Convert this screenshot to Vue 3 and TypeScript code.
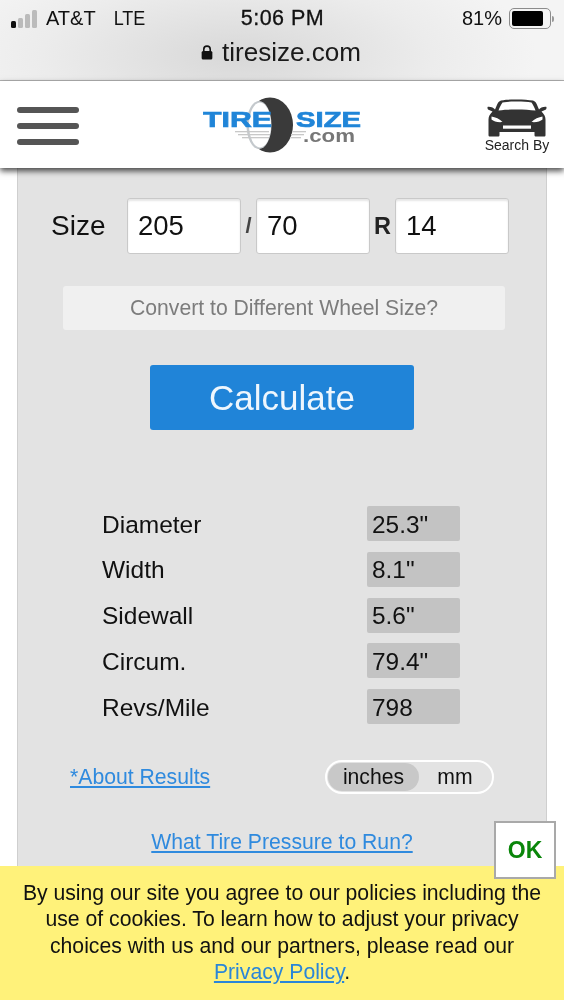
<script setup lang="ts">
const rows = [
  { label: 'Diameter', value: '25.3"' },
  { label: 'Width', value: '8.1"' },
  { label: 'Sidewall', value: '5.6"' },
  { label: 'Circum.', value: '79.4"' },
  { label: 'Revs/Mile', value: '798' },
]
</script>

<template>
  <div class="page">
    <header class="browser">
      <div class="status">
        <div class="status-left">
          <span class="signal"><i class="on"></i><i></i><i></i><i></i></span>
          <span>AT&amp;T</span>
          <span class="lte">LTE</span>
        </div>
        <div class="time">5:06 PM</div>
        <div class="status-right">
          <span>81%</span>
          <span class="battery"><span class="level"></span></span>
          <span class="nub"></span>
        </div>
      </div>
      <div class="address">
        <svg class="lock" viewBox="0 0 11 14" width="12" height="15">
          <path d="M2.500 6V4a3 3 0 0 1 6 0v2" fill="none" stroke="#111" stroke-width="1.500" />
          <rect x="0.500" y="5.500" width="10" height="8" rx="1.400" fill="#111" />
        </svg>
        <span>tiresize.com</span>
      </div>
    </header>

    <nav class="nav">
      <div class="burger"><i></i><i></i><i></i></div>
      <svg class="logo" viewBox="0 0 160 58" width="160" height="58">
        <ellipse cx="67" cy="29" rx="23" ry="27.500" fill="#3a3a3a" />
        <ellipse cx="56" cy="29" rx="12.500" ry="24" fill="#c4c9cd" />
        <ellipse cx="57" cy="29" rx="11" ry="22.500" fill="#fff" />
        <g fill="#c8c8c8">
          <rect x="32" y="35" width="34" height="1.300" />
          <rect x="35" y="38" width="32" height="1.300" />
          <rect x="39" y="41" width="27" height="1.300" />
          <rect x="89" y="35" width="14" height="1.300" />
          <rect x="88" y="38" width="13" height="1.300" />
          <rect x="87" y="41" width="11" height="1.300" />
        </g>
        <text x="0" y="31" class="logo-word" textLength="69" lengthAdjust="spacingAndGlyphs">TIRE</text>
        <text x="93" y="31" class="logo-word" textLength="65" lengthAdjust="spacingAndGlyphs">SIZE</text>
        <text x="100" y="46" class="logo-com" textLength="52" lengthAdjust="spacingAndGlyphs">.com</text>
      </svg>
      <div class="search-by">
        <svg class="car" viewBox="0 0 60 38" width="60" height="38">
          <path fill="#333" d="M14 1.500 C22 0 38 0 46 1.500 C48 2 49.500 4 50.500 7 L52 10.500 C53 8.800 56 7.600 59 7.800 C60 8 59.500 10 58.500 10.800 L54.500 12.500 C57 15 58.500 17.500 58.500 20.500 V36 C58.500 37 58 37.500 57 37.500 H49 C48 37.500 47.500 37 47.500 36 V33 H12.500 V36 C12.500 37 12 37.500 11 37.500 H3 C2 37.500 1.500 37 1.500 36 V20.500 C1.500 17.500 3 15 5.500 12.500 L1.500 10.800 C0.500 10 0 8 1 7.800 C4 7.600 7 8.800 8 10.500 L9.500 7 C10.500 4 12 2 14 1.500 Z" />
          <path fill="#fff" d="M15.500 3.500 C23 2.300 37 2.300 44.500 3.500 C46 5.500 47.500 8.500 48.500 11.500 C38 10 22 10 11.500 11.500 C12.500 8.500 14 5.500 15.500 3.500 Z" />
          <path fill="#fff" d="M4.500 17.500 C8 18 13 20 15.500 23 C11 23.500 6.500 22.500 4.500 20.500 Z M55.500 17.500 C52 18 47 20 44.500 23 C49 23.500 53.500 22.500 55.500 20.500 Z" />
          <rect x="16" y="26.500" width="28" height="3.200" fill="#fff" />
        </svg>
        <span>Search By</span>
      </div>
    </nav>

    <main class="card">
      <div class="size-row">
        <span class="size-label">Size</span>
        <div class="field">205</div>
        <span class="sep slash">/</span>
        <div class="field">70</div>
        <span class="sep r">R</span>
        <div class="field">14</div>
      </div>

      <div class="convert">Convert to Different Wheel Size?</div>

      <button class="calc" type="button">Calculate</button>

      <div class="results">
        <div v-for="row in rows" :key="row.label" class="result">
          <span class="result-label">{{ row.label }}</span>
          <span class="result-value">{{ row.value }}</span>
        </div>
      </div>

      <div class="options">
        <a class="link about">*About Results</a>
        <div class="toggle">
          <span class="opt active">inches</span>
          <span class="opt">mm</span>
        </div>
      </div>

      <div class="pressure"><a class="link">What Tire Pressure to Run?</a></div>
    </main>

    <aside class="cookie">
      <p>
        By using our site you agree to our policies including the use of cookies. To learn how to adjust your privacy
        choices with us and our partners, please read our <a class="policy">Privacy Policy</a>.
      </p>
      <button class="ok" type="button">OK</button>
    </aside>
  </div>
</template>

<style>
html, body { margin: 0; padding: 0; background: #fff; }
</style>

<style scoped>
.page {
  position: relative;
  width: 564px;
  height: 1000px;
  overflow: hidden;
  background: #fff;
  font-family: "Liberation Sans", Arial, sans-serif;
  color: #111;
  filter: blur(0.35px);
}
.browser {
  height: 80px;
  box-sizing: content-box;
  border-bottom: 1px solid #b4b4b4;
  background: radial-gradient(ellipse 300px 110px at 42% 70%, #d8d8d8, #ececec 65%, #f4f4f4);
}
.status {
  display: grid;
  grid-template-columns: 1fr auto 1fr;
  align-items: center;
  height: 37px;
  padding: 0 10px 0 11px;
  font-size: 20px;
}
.status-left { display: flex; align-items: center; }
.signal { display: flex; align-items: flex-end; gap: 2px; width: 29px; height: 18px; margin-right: 6px; }
.signal i { width: 5px; background: #bbb; border-radius: 1.500px; }
.signal i:nth-child(1) { height: 7px; background: #111; }
.signal i:nth-child(2) { height: 10px; }
.signal i:nth-child(3) { height: 14px; }
.signal i:nth-child(4) { height: 18px; }
.lte { margin-left: 18px; font-size: 18px; transform: scaleY(1.100); }
.time { font-size: 21.500px; letter-spacing: 0.500px; -webkit-text-stroke: 0.300px #111; }
.status-right { display: flex; align-items: center; justify-content: flex-end; }
.battery {
  display: flex;
  align-items: center;
  box-sizing: border-box;
  width: 42px;
  height: 21px;
  margin-left: 7px;
  padding: 2px;
  border: 1px solid #8c8c8c;
  border-radius: 5px;
}
.level { width: 31px; height: 15px; background: #000; border-radius: 2px; }
.nub { width: 2px; height: 6px; margin-left: 1px; background: #999; border-radius: 0 2px 2px 0; }
.address {
  display: flex;
  align-items: center;
  justify-content: center;
  gap: 9px;
  height: 30px;
  padding-right: 2px;
  font-size: 26.100px;
  color: #1a1a1a;
}
.nav {
  position: relative;
  z-index: 2;
  display: flex;
  align-items: center;
  justify-content: space-between;
  height: 87px;
  padding: 0 14px 0 17px;
  background: #fff;
  box-shadow: 0 3px 6px rgba(0, 0, 0, 0.7);
}
.burger { display: flex; flex-direction: column; gap: 10px; width: 62px; margin-top: 2px; }
.burger i { height: 6px; background: #555; border-radius: 3px; }
.logo { margin-left: 4px; margin-top: 1px; }
.logo-word { font-family: "Liberation Sans", Arial, sans-serif; font-weight: 700; font-size: 22.500px; fill: #2085d8; stroke: #2085d8; stroke-width: 0.700px; }
.logo-com { font-family: "Liberation Sans", Arial, sans-serif; font-weight: 700; font-size: 18px; fill: #777; }
.search-by { display: flex; flex-direction: column; align-items: center; width: 68px; font-size: 14px; color: #222; margin: 2px -1px 0 0; white-space: nowrap; }
.car { display: block; margin-bottom: 0; }
.card {
  margin: 0 17px;
  height: 760px;
  box-sizing: border-box;
  background: #e3e3e3;
  border: 1px solid #cfcfcf;
  border-top: 0;
}
.size-row {
  display: flex;
  align-items: center;
  padding: 30px 0 0 33px;
}
.size-label { width: 76px; font-size: 28px; }
.field {
  box-sizing: border-box;
  display: flex;
  align-items: center;
  width: 114px;
  height: 56px;
  padding-left: 10px;
  font-size: 27.500px;
  background: #fff;
  border: 1.500px solid #c9c9c9;
  border-radius: 3px;
  box-shadow: inset 0 2px 2px rgba(0, 0, 0, 0.1);
}
.sep { display: block; text-align: center; }
.slash { width: 15px; font-size: 22px; font-weight: 700; color: #444; }
.r { width: 25px; font-size: 23.500px; font-weight: 700; color: #222; }
.convert {
  margin: 32px 41px 0 45px;
  height: 44px;
  display: flex;
  align-items: center;
  justify-content: center;
  background: #f0f0f0;
  border-radius: 3px;
  color: #7c7c7c;
  font-size: 21.200px;
}
.calc {
  display: block;
  width: 264px;
  height: 65px;
  margin: 35px 0 0 132px;
  padding: 0;
  border: 0;
  border-radius: 3px;
  background: #2084d8;
  color: #eef6fd;
  font-family: inherit;
  font-size: 35px;
}
.results { display: flex; flex-direction: column; gap: 10.800px; margin: 76px 0 0 84px; }
.result { display: flex; align-items: center; height: 35px; }
.result-label { width: 265px; font-size: 24.500px; padding-top: 2px; }
.result-value {
  box-sizing: border-box;
  width: 93px;
  height: 35px;
  display: flex;
  align-items: center;
  padding: 2px 0 0 5px;
  background: #c3c3c3;
  border-radius: 2px;
  font-size: 24.400px;
}
.options {
  display: flex;
  align-items: center;
  justify-content: space-between;
  margin: 36px 52px 0 52px;
  height: 34px;
}
.link { color: #2f8ade; text-decoration: underline; font-size: 21.200px; }
.toggle {
  box-sizing: border-box;
  display: flex;
  width: 169px;
  height: 34px;
  padding: 1px;
  border: 2px solid #fff;
  border-radius: 17px;
  font-size: 21.200px;
}
.opt { display: flex; align-items: center; justify-content: center; border-radius: 15px; flex: 1; }
.opt.active { flex: none; width: 91px; background: #c8c8c8; }
.pressure { margin-top: 36px; text-align: center; }
.cookie {
  position: absolute;
  left: 0;
  right: 0;
  bottom: 0;
  z-index: 3;
  height: 134px;
  box-sizing: border-box;
  padding: 14px 17px 0;
  background: #fff27a;
  text-align: center;
  font-size: 21.200px;
  line-height: 26.400px;
  color: #111;
}
.cookie p { margin: 0; }
.policy { color: #2a86d8; text-decoration: underline; }
.ok {
  position: absolute;
  top: -45px;
  left: 494px;
  width: 62px;
  height: 58px;
  padding: 0;
  box-sizing: border-box;
  background: #fff;
  border: 2px solid #a9a9a9;
  color: #0a860a;
  font-family: inherit;
  font-weight: 700;
  font-size: 23px;
}
</style>
